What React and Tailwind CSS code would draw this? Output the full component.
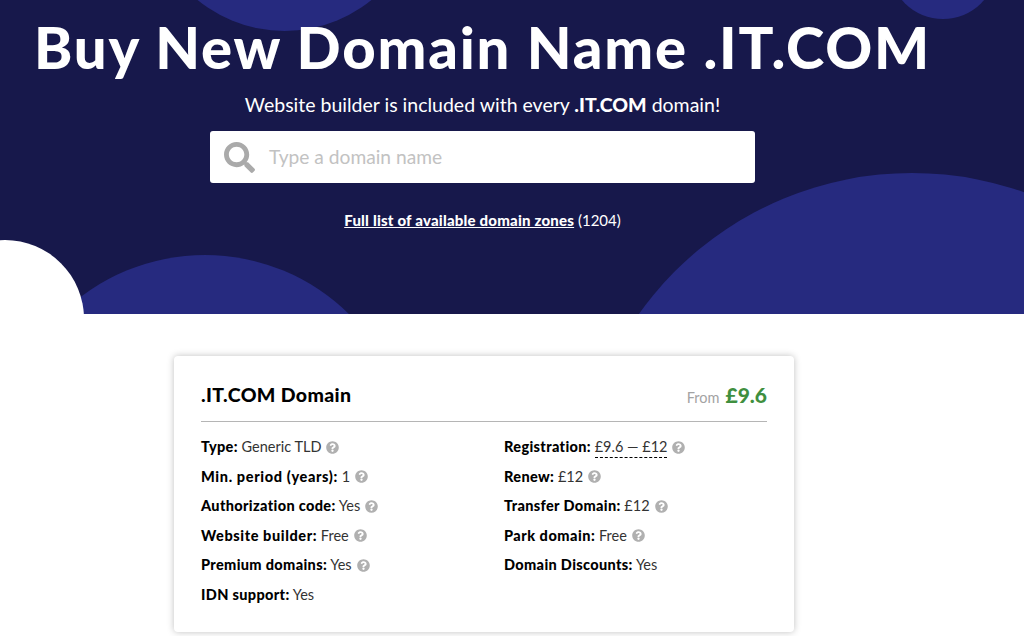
import React from "react";
import { FaSearch, FaQuestionCircle } from "react-icons/fa";

const Help = () => <FaQuestionCircle className="ml-[5px] inline-block h-[13px] w-[13px] text-[#b0b0b0] align-[-1.5px]" />;

const Row = ({ label, value, help = true, dashed = false, labelClass = "tracking-[0.35px]" }) => (
  <div className="h-[29.5px] whitespace-nowrap text-[14.5px] leading-[29.5px] text-[#333]">
    <span className={`font-black text-black ${labelClass}`}>{label}:</span>{" "}
    {dashed ? <span className="border-b border-dashed border-black pb-[2px]">{value}</span> : value}
    {help && <Help />}
  </div>
);

export default function App() {
  return (
    <div className="h-[636px] overflow-hidden bg-white font-['Lato',sans-serif]">
      <section className="relative h-[314px] overflow-hidden bg-[#17184b] text-white">
        <div className="absolute left-[147px] top-[-244px] h-[275px] w-[275px] rounded-full bg-[#262a7f]" />
        <div className="absolute left-[889px] top-[-89px] h-[108px] w-[108px] rounded-full bg-[#262a7f]" />
        <div className="absolute left-[577px] top-[173px] h-[670px] w-[670px] rounded-full bg-[#262a7f]" />
        <div className="absolute left-0 top-[255px] h-[410px] w-[410px] rounded-full bg-[#262a7f]" />
        <div className="absolute left-[-74px] top-[240px] h-[158px] w-[158px] rounded-full bg-white" />

        <div className="relative flex flex-col items-center pr-[59px]">
          <h1 className="mt-[8px] h-[78px] whitespace-nowrap text-[58px] font-black leading-[78px] tracking-[1.8px]">Buy New Domain Name .IT.COM</h1>
          <p className="mt-[6px] h-[26px] whitespace-nowrap text-[19.5px] leading-[26px]">
            Website builder is included with every <b className="font-black">.IT.COM</b> domain!
          </p>
          <div className="mt-[13px] flex h-[52px] w-[545px] items-center rounded-[3px] bg-white pl-[14px]">
            <FaSearch className="h-[31px] w-[31px] text-[#aaaaaa]" />
            <span className="ml-[14px] text-[19.2px] text-[#c2c2c2]">Type a domain name</span>
          </div>
          <p className="mt-[27px] text-[15px] leading-[20px]">
            <a className="font-black underline tracking-[0.2px]">Full list of available domain zones</a> (1204)
          </p>
        </div>
      </section>

      <section className="ml-[174px] mt-[42px] h-[276px] w-[620px] rounded-[4px] bg-white px-[27px] shadow-[0_0_7px_rgba(0,0,0,0.25)]">
        <div className="flex h-[66px] items-center justify-between border-b border-[#b5b5b5] pt-[12px]">
          <h2 className="text-[19.5px] font-black tracking-[0.35px] text-black">.IT.COM Domain</h2>
          <div className="flex items-baseline gap-[6px]">
            <span className="text-[14.5px] text-[#a3a3a3]">From</span>
            <span className="text-[21px] font-black text-[#3f8f3f]">£9.6</span>
          </div>
        </div>
        <div className="mt-[10px] flex">
          <div className="w-[303px]">
            <Row label="Type" value="Generic TLD" />
            <Row label="Min. period (years)" value="1" labelClass="tracking-[0.65px]" />
            <Row label="Authorization code" value="Yes" />
            <Row label="Website builder" value="Free" labelClass="tracking-[0.6px]" />
            <Row label="Premium domains" value="Yes" />
            <Row label="IDN support" value="Yes" help={false} />
          </div>
          <div>
            <Row label="Registration" value="£9.6 — £12" dashed />
            <Row label="Renew" value="£12" />
            <Row label="Transfer Domain" value="£12" />
            <Row label="Park domain" value="Free" labelClass="tracking-[0.5px]" />
            <Row label="Domain Discounts" value="Yes" help={false} />
          </div>
        </div>
      </section>
    </div>
  );
}
